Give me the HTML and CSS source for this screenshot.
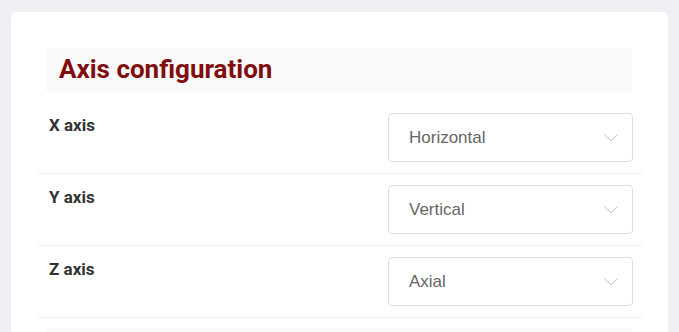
FILE: index.html
```html
<!DOCTYPE html>
<html lang="en">
<head>
  <meta charset="UTF-8">
  <meta name="viewport" content="width=device-width, initial-scale=1.0">
  <title>Axis configuration</title>
  <link rel="stylesheet" href="styles.css">
</head>
<body>

  <div class="card">
    <div class="section">
      <h2 class="section-title">Axis configuration</h2>

      <div class="row">
        <label class="row-label">X axis</label>
        <div class="select">
          <span class="select-value">Horizontal</span>
          <svg class="chevron" width="14" height="8" viewBox="0 0 14 8"><path d="M0.5 0.5 L7 7 L13.5 0.5" fill="none" stroke="#c4c7cf" stroke-width="1"/></svg>
        </div>
      </div>

      <div class="row">
        <label class="row-label">Y axis</label>
        <div class="select">
          <span class="select-value">Vertical</span>
          <svg class="chevron" width="14" height="8" viewBox="0 0 14 8"><path d="M0.5 0.5 L7 7 L13.5 0.5" fill="none" stroke="#c4c7cf" stroke-width="1"/></svg>
        </div>
      </div>

      <div class="row">
        <label class="row-label">Z axis</label>
        <div class="select">
          <span class="select-value">Axial</span>
          <svg class="chevron" width="14" height="8" viewBox="0 0 14 8"><path d="M0.5 0.5 L7 7 L13.5 0.5" fill="none" stroke="#c4c7cf" stroke-width="1"/></svg>
        </div>
      </div>
    </div>

    <!-- next section, only its header band shows at the bottom -->
    <div class="section">
      <div class="section-title"></div>
    </div>
  </div>

</body>
</html>
```

FILE: styles.css
```css
body {
  margin: 0;
  padding: 12px 11px;
  background: #efeff4;
  font-family: Roboto, "Liberation Sans", Arial, sans-serif;
  color: #333;
}
.card {
  background: #fff;
  border-radius: 5px;
  padding: 36px 24px 20px 25px;
}
.section + .section {
  margin-top: 10px;
}
.section-title {
  margin: 0 12px 11px 10px;
  padding: 0 13px;
  height: 43px;
  line-height: 43px;
  background: #f9f9f9;
  color: #800e0e;
  font-size: 26px;
  font-weight: 700;
}
.row {
  display: flex;
  justify-content: space-between;
  align-items: flex-start;
  padding: 11px 11px 11px 13px;
  border-bottom: 1px solid #f1f1f3;
}
.row-label {
  font-size: 17px;
  font-weight: 700;
  line-height: 24px;
  color: #333;
}
.select {
  box-sizing: border-box;
  width: 245px;
  height: 49px;
  display: flex;
  align-items: center;
  justify-content: space-between;
  padding: 0 14px 0 20px;
  border: 1px solid #dcdee3;
  border-radius: 4px;
  background: #fff;
}
.select-value {
  font-family: "Liberation Sans", Arial, sans-serif;
  font-size: 17px;
  color: #666;
}
.chevron {
  display: block;
}
```
